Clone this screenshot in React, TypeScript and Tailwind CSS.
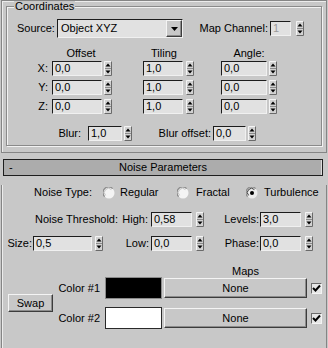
import React from 'react';

const cx = (...c: (string | false | undefined)[]) => c.filter(Boolean).join(' ');

function Spinner({ className }: { className?: string }) {
  return (
    <svg width="8" height="15" viewBox="0 0 8 15" className={cx('block shrink-0', className)}>
      <rect x="0" y="0" width="8" height="15" fill="#d2d2d2" />
      <path d="M0.5 14.5V0.5H7.5" stroke="#f4f4f4" fill="none" />
      <path d="M7.5 0.5V14.5H0.5" stroke="#6a6a6a" fill="none" />
      <path d="M1 7.5H7" stroke="#8a8a8a" />
      <polygon points="4,2.5 6.5,5.5 1.5,5.5" fill="#000" />
      <polygon points="1.5,9.5 6.5,9.5 4,12.5" fill="#000" />
    </svg>
  );
}

function Field({ value, className, dim }: { value: string; className: string; dim?: boolean }) {
  return (
    <div
      className={cx(
        'h-[15px] shrink-0 flex items-center pl-[2px] bg-[#e1e1e1] border border-t-[#1c1c1c] border-l-[#1c1c1c] border-b-[#f0f0f0] border-r-[#f0f0f0]',
        dim && 'text-[#9a9a9a] bg-[#d6d6d6]',
        className
      )}
    >
      {value}
    </div>
  );
}

function Radio({ checked }: { checked?: boolean }) {
  return (
    <svg width="12" height="12" viewBox="0 0 12 12" className="block shrink-0">
      <circle cx="6" cy="6" r="5.5" fill={checked ? '#ececec' : '#f4f4f4'} />
      <path d="M1.6 9.6A5 5 0 0 1 9.6 1.6" stroke="#8a8a8a" strokeWidth="1.2" fill="none" />
      <path d="M2.6 8.4A3.8 3.8 0 0 1 8.4 2.6" stroke={checked ? '#3a3a3a' : '#c4c4c4'} strokeWidth="1" fill="none" />
      {checked && <circle cx="6" cy="6" r="2" fill="#000" />}
    </svg>
  );
}

function Raised({ children, className }: { children: React.ReactNode; className: string }) {
  return (
    <div
      className={cx(
        'shrink-0 flex items-center justify-center bg-[#c8c8c8] border border-t-[#f4f4f4] border-l-[#f4f4f4] border-b-[#3c3c3c] border-r-[#3c3c3c] shadow-[inset_-1px_-1px_0_#8c8c8c]',
        className
      )}
    >
      {children}
    </div>
  );
}

function Check() {
  return (
    <div className="w-[11px] h-[11px] shrink-0 bg-[#e6e6e6] border border-t-[#6a6a6a] border-l-[#6a6a6a] border-b-[#f4f4f4] border-r-[#f4f4f4] flex items-center justify-center">
      <svg width="9" height="9" viewBox="0 0 9 9" className="block">
        <path d="M1 4L3.5 6.5L8 1.5" stroke="#000" strokeWidth="2" fill="none" />
      </svg>
    </div>
  );
}

function XyzRow({ axis, tiling, first }: { axis: string; tiling: string; first?: boolean }) {
  return (
    <div className={cx('h-[15px] flex items-center', first ? 'mt-[2px]' : 'mt-[4px]')}>
      <div className="w-[41px] text-right">{axis}:</div>
      <Field value="0,0" className="ml-[4px] w-[50px]" />
      <Spinner className="ml-[2px]" />
      <Field value={tiling} className="ml-[31px] w-[40px]" />
      <Spinner className="ml-[3px]" />
      <Field value="0,0" className="ml-[27px] w-[46px]" />
      <Spinner className="ml-[2px]" />
    </div>
  );
}

function ColorRow({ label, swatch }: { label: string; swatch: string }) {
  return (
    <div className="h-[22px] flex items-center">
      <div className="w-[47px] text-right">{label}</div>
      <div className={cx('ml-[5px] w-[57px] h-[22px] shrink-0 border', swatch)} />
      <Raised className="ml-[2px] w-[143px] h-[20px]">None</Raised>
      <div className="ml-[4px]">
        <Check />
      </div>
    </div>
  );
}

export default function App() {
  return (
    <div className="w-[328px] h-[348px] overflow-hidden bg-[#c8c8c8] font-['Liberation_Sans',Arial,sans-serif] text-[11px] leading-none text-black">
      {/* Coordinates rollout */}
      <div className="ml-[1px] w-[326px] h-[153px] border border-[#858585] shadow-[inset_1px_1px_0_#ececec]">
        <div className="relative mt-[5px] ml-[4px] w-[316px] h-[140px] border border-[#8a8a8a] shadow-[1px_1px_0_#f2f2f2,inset_1px_1px_0_#f2f2f2]">
          <div className="absolute left-[7px] -top-[6px] px-[1px] bg-[#c8c8c8]">Coordinates</div>

          <div className="mt-[12px] h-[19px] flex items-center">
            <div className="ml-[10px] w-[40px]">Source:</div>
            <div className="w-[126px] h-[19px] shrink-0 flex items-center bg-[#e1e1e1] border border-t-[#1c1c1c] border-l-[#1c1c1c] border-b-[#f0f0f0] border-r-[#f0f0f0]">
              <div className="flex-1 pl-[3px]">Object XYZ</div>
              <Raised className="w-[16px] h-[17px]">
                <svg width="7" height="4" viewBox="0 0 7 4" className="block">
                  <polygon points="0,0 7,0 3.5,4" fill="#000" />
                </svg>
              </Raised>
            </div>
            <div className="w-[85px] text-right">Map Channel:</div>
            <Field value="1" dim className="ml-[2px] w-[21px]" />
            <Spinner className="ml-[5px]" />
          </div>

          <div className="mt-[9px] h-[12px] flex items-center">
            <div className="ml-[45px] w-[58px] text-center">Offset</div>
            <div className="ml-[20px] w-[68px] text-center">Tiling</div>
            <div className="ml-[22px] w-[58px] text-center">Angle:</div>
          </div>

          <XyzRow axis="X" tiling="1,0" first />
          <XyzRow axis="Y" tiling="1,0" />
          <XyzRow axis="Z" tiling="1,0" />

          <div className="mt-[12px] h-[15px] flex items-center">
            <div className="w-[74px] text-right">Blur:</div>
            <Field value="1,0" className="ml-[7px] w-[34px]" />
            <Spinner className="ml-[2px]" />
            <div className="w-[79px] text-right">Blur offset:</div>
            <Field value="0,0" className="ml-[2px] w-[33px]" />
            <Spinner className="ml-[2px]" />
          </div>
        </div>
      </div>

      {/* Noise Parameters rollout */}
      <div className="mt-[6px] ml-[3px] w-[320px] h-[17px] flex items-center bg-[#acacac] border border-[#1e1e1e] shadow-[inset_-1px_0_0_#dcdcdc]">
        <div className="w-[14px] pl-[5px]">-</div>
        <div className="flex-1 text-center">Noise Parameters</div>
        <div className="w-[14px]" />
      </div>
      <div className="ml-[1px] w-[326px] h-[164px] border-x border-b border-[#858585] shadow-[inset_1px_0_0_#ececec]">
        <div className="mt-[9px] h-[15px] flex items-center">
          <div className="w-[90px] text-right">Noise Type:</div>
          <div className="ml-[11px] w-[74px] flex items-center">
            <Radio />
            <span className="ml-[5px]">Regular</span>
          </div>
          <div className="w-[69px] flex items-center">
            <Radio />
            <span className="ml-[7px]">Fractal</span>
          </div>
          <div className="flex items-center">
            <Radio checked />
            <span className="ml-[6px]">Turbulence</span>
          </div>
        </div>

        <div className="mt-[12px] h-[15px] flex items-center">
          <div className="w-[116px] text-right">Noise Threshold:</div>
          <div className="w-[30px] text-right">High:</div>
          <Field value="0,58" className="ml-[3px] w-[41px]" />
          <Spinner className="ml-[4px]" />
          <div className="w-[55px] text-right">Levels:</div>
          <Field value="3,0" className="ml-[1px] w-[41px]" />
          <Spinner className="ml-[4px]" />
        </div>

        <div className="mt-[9px] h-[15px] flex items-center">
          <div className="w-[30px] text-right">Size:</div>
          <Field value="0,5" className="ml-[1px] w-[59px]" />
          <Spinner className="ml-[3px]" />
          <div className="w-[46px] text-right">Low:</div>
          <Field value="0,0" className="ml-[2px] w-[41px]" />
          <Spinner className="ml-[4px]" />
          <div className="w-[55px] text-right">Phase:</div>
          <Field value="0,0" className="ml-[1px] w-[41px]" />
          <Spinner className="ml-[4px]" />
        </div>

        <div className="mt-[15px] h-[11px] flex items-center">
          <div className="ml-[230px]">Maps</div>
        </div>

        <div className="flex items-center">
          <Raised className="ml-[6px] w-[45px] h-[18px]">Swap</Raised>
          <div className="flex flex-col gap-[8px]">
            <ColorRow label="Color #1" swatch="bg-black border-[#8a8a8a]" />
            <ColorRow label="Color #2" swatch="bg-white border-[#2a2a2a]" />
          </div>
        </div>
      </div>
    </div>
  );
}
